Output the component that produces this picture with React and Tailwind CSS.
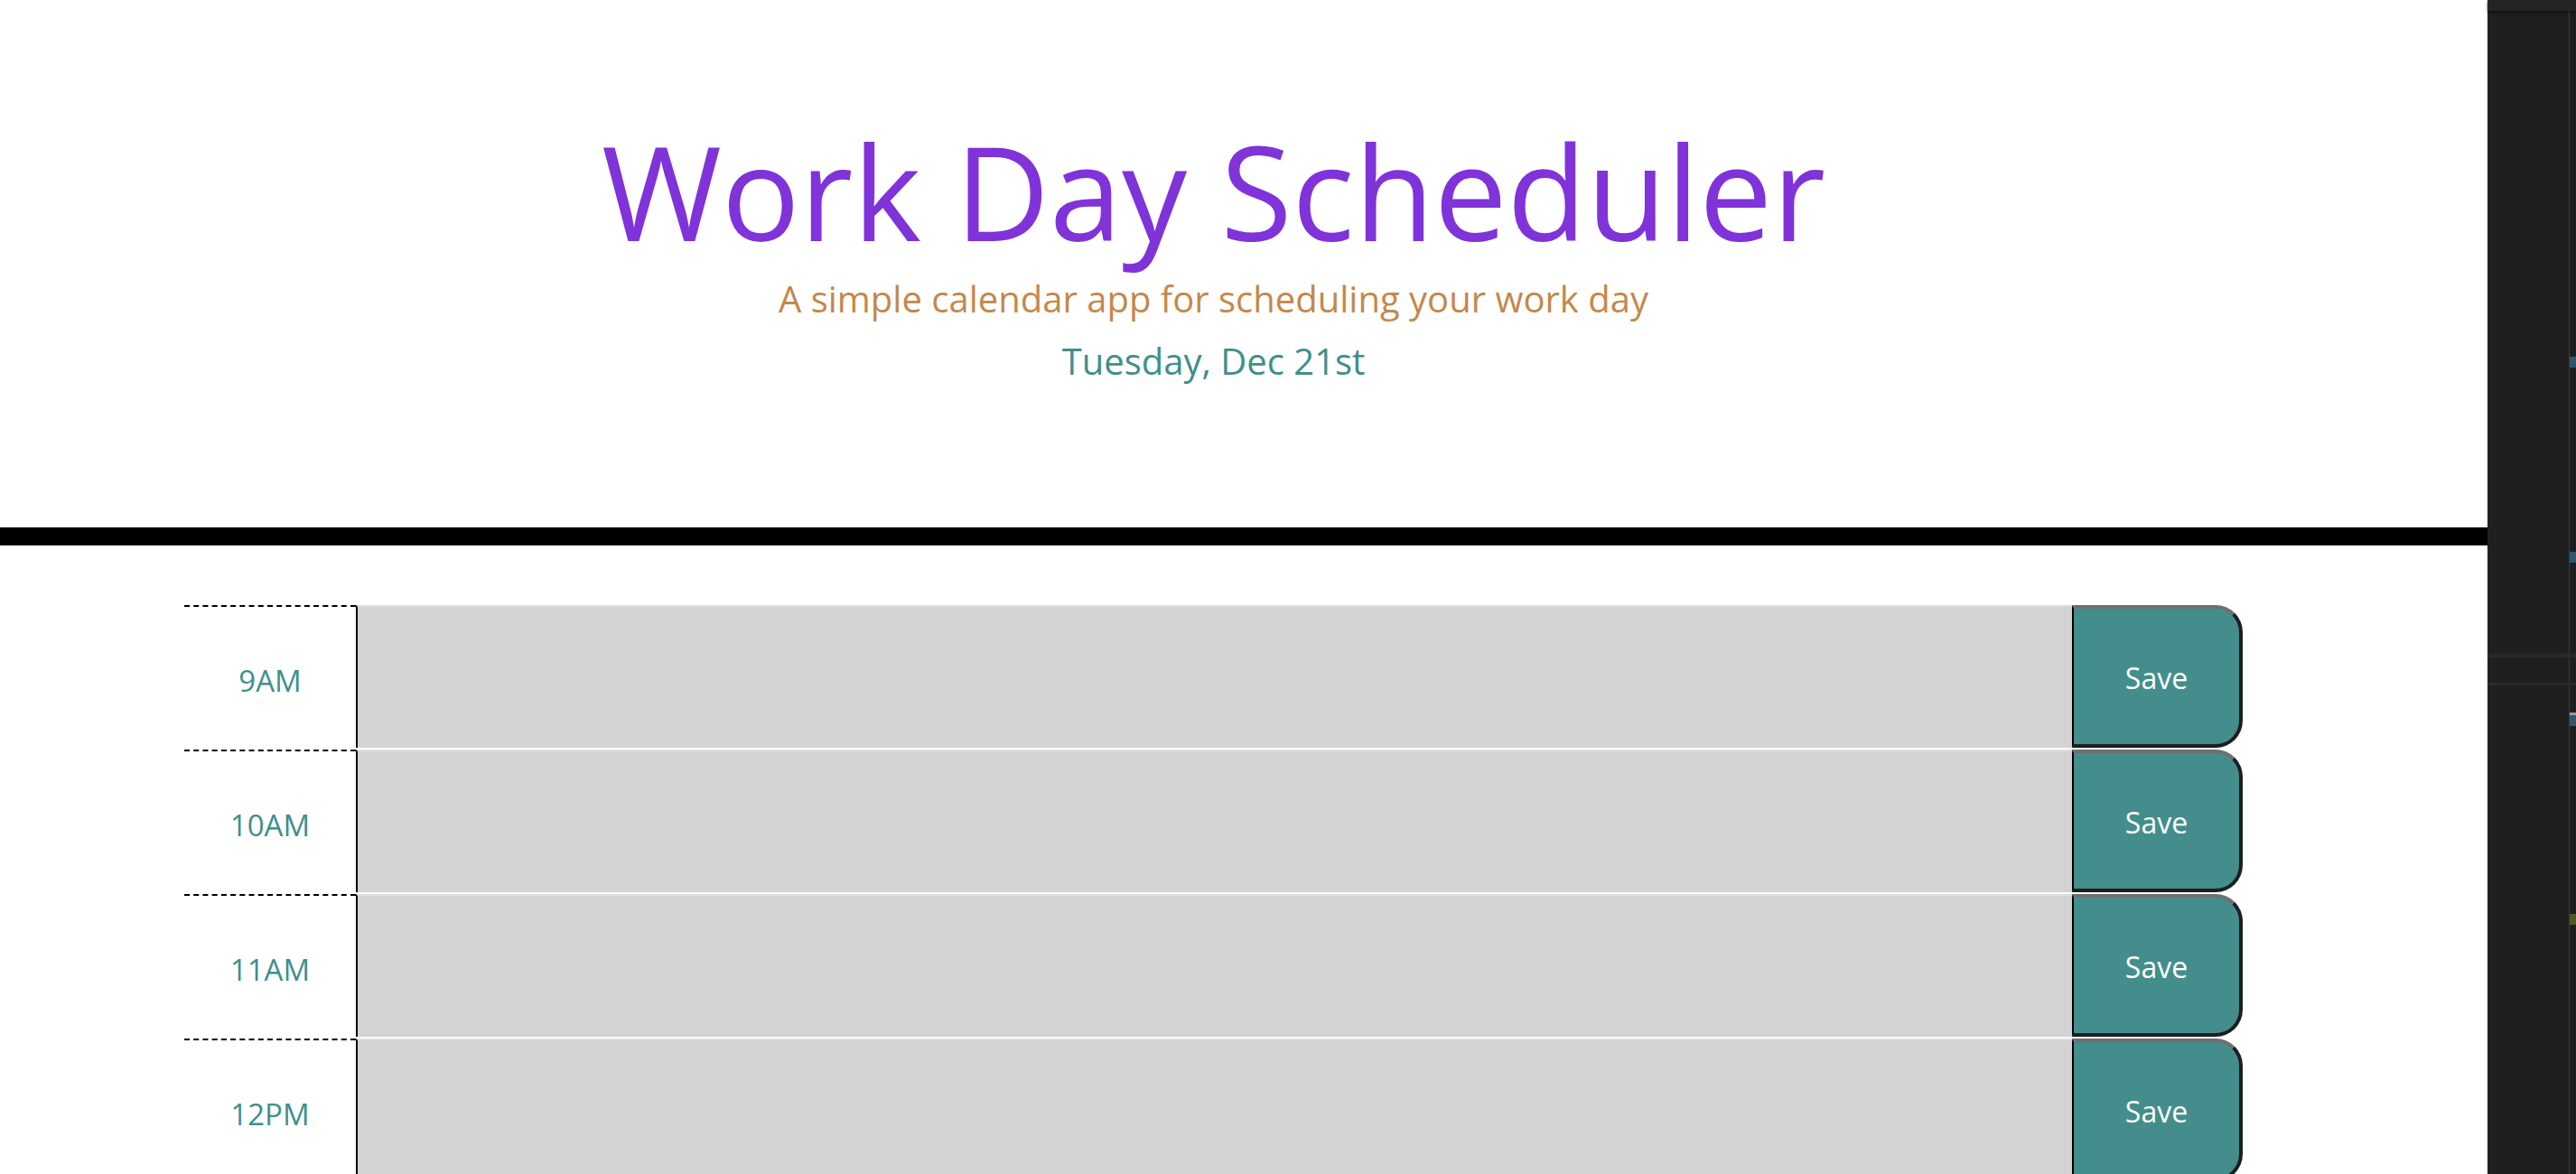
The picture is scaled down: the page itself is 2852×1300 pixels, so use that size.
import React from 'react';

const hours = ['9AM', '10AM', '11AM', '12PM', '1PM', '2PM', '3PM', '4PM', '5PM'];

const TimeBlock = ({ hour }) => (
    <div className="flex h-[160px] border-t-2 border-white">
        <div className="w-[190px] shrink-0 border-t-2 border-dashed border-black flex items-center justify-center pt-[8px] text-[33px] text-[#3f8f8c]">
            {hour}
        </div>
        <textarea className="flex-1 bg-[#d3d3d3] border-l-2 border-black border-t-2 border-t-[#dcdfe2] resize-none outline-none p-5" />
        <button
            type="button"
            className="w-[189px] shrink-0 pt-[4px] bg-[#438e8c] text-white text-[32px] rounded-r-[30px] border-l-2 border-l-black border-t-4 border-t-[#6f6f6f] border-r-4 border-r-[#1e1e1e] border-b-4 border-b-[#1e1e1e]"
        >
            Save
        </button>
    </div>
);

export default function App() {
    return (
        <div className="flex h-[1300px] overflow-hidden bg-white font-['Open_Sans',sans-serif]">
            <div className="w-[2754px] shrink-0">
                {/* Jumbotron */}
                <header className="pt-[139px] pb-[164px] border-b-[20px] border-black">
                    <div className="ml-[204px] w-[2279px] text-center">
                        <h1 className="text-[144px] leading-none font-normal text-[#7f33d9]">Work Day Scheduler</h1>
                        <p className="mt-[28px] text-[40px] leading-none text-[#c4884b]">A simple calendar app for scheduling your work day</p>
                        <p className="mt-[29px] text-[40px] leading-none text-[#3f8f8c]">Tuesday, Dec 21st</p>
                    </div>
                </header>

                <div className="ml-[204px] w-[2279px] mt-[64px]">
                    {hours.map(h => <TimeBlock key={h} hour={h} />)}
                </div>
            </div>

            {/* editor side panel */}
            <div className="relative flex-1 bg-[#1f1f1f] flex flex-col">
                <div className="h-[12px] bg-[#242424] shadow-[0_2px_3px_rgba(0,0,0,0.5)]" />
                <div className="flex flex-1">
                    <div className="flex-1" />
                    <div className="w-px bg-[#3a3a3a]" />
                    <div className="w-[7px]" />
                </div>
                <div className="absolute left-0 right-0 top-[724px] h-[4px] bg-[#2a2a2a]" />
                <div className="absolute left-0 right-0 top-[756px] h-[3px] bg-[#2a2a2a]" />
                <div className="absolute right-0 w-[7px] top-[395px] h-[12px] bg-[#31566b]" />
                <div className="absolute right-0 w-[7px] top-[611px] h-[12px] bg-[#31566b]" />
                <div className="absolute right-0 w-[7px] top-[789px] h-[3px] bg-[#9a9a9a]" />
                <div className="absolute right-0 w-[7px] top-[792px] h-[12px] bg-[#31566b]" />
                <div className="absolute right-0 w-[7px] top-[1012px] h-[12px] bg-[#4f5a27]" />
            </div>
        </div>
    );
}
